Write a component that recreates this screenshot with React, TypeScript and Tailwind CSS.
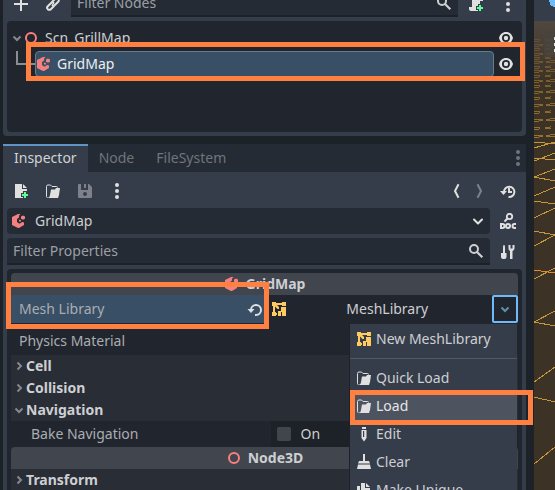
import type { ReactNode } from "react";

type IconProps = { className?: string };

function Svg({ className = "", children }: IconProps & { children: ReactNode }) {
  return (
    <svg viewBox="0 0 16 16" className={`size-4 shrink-0 ${className}`} fill="currentColor" aria-hidden="true">
      {children}
    </svg>
  );
}

const PlusBadge = () => (
  <>
    <path d="M10 8h4v2h2v4h-2v2h-4v-2H8v-4h2z" fill="#363d4a" />
    <path d="M11 9h2v2h2v2h-2v2h-2v-2H9v-2h2z" fill="#5fff97" />
  </>
);

const AddIcon = () => (
  <Svg><path d="M7 1v6H1v2h6v6h2V9h6V7H9V1z" /></Svg>
);
const LinkIcon = () => (
  <Svg>
    <g fill="none" stroke="currentColor" strokeWidth="2" strokeLinecap="round" strokeLinejoin="round">
      <path d="M7.2 5.8l3-3a2.1 2.1 0 0 1 3 3l-3 3a2.1 2.1 0 0 1-2.6.3" />
      <path d="M8.800 10.200l-3 3a2.100 2.100 0 0 1-3-3l3-3a2.100 2.100 0 0 1 2.600-.3" />
    </g>
  </Svg>
);
const SearchIcon = () => (
  <Svg>
    <circle cx="6" cy="6" r="4" fill="none" stroke="currentColor" strokeWidth="2" />
    <path d="M9 9l5.300 5.300" stroke="currentColor" strokeWidth="2.200" />
  </Svg>
);
const ScriptAddIcon = () => (
  <Svg>
    <path d="M6 1a2 2 0 0 0-2 2v8H1v2a2 2 0 0 0 2 2h7a2 2 0 0 0 2-2V5h3V3a2 2 0 0 0-2-2zm6 2h1v1h-1z" />
    <PlusBadge />
  </Svg>
);
const DotsIcon = ({ className }: IconProps) => (
  <Svg className={className}>
    <circle cx="8" cy="2" r="2" /><circle cx="8" cy="8" r="2" /><circle cx="8" cy="14" r="2" />
  </Svg>
);
const EyeIcon = () => (
  <Svg>
    <path fillRule="evenodd" d="M8 2C4.300 2 2 4.500 1 8c1 3.500 3.300 6 7 6s6-2.500 7-6c-1-3.500-3.300-6-7-6zM8 4a4 4 0 1 1 0 8 4 4 0 0 1 0-8z" />
    <circle cx="8" cy="8" r="2.200" />
  </Svg>
);
const NodeRing = () => (
  <Svg className="text-[#fc7f7f]">
    <circle cx="8" cy="8" r="5" fill="none" stroke="currentColor" strokeWidth="2" />
  </Svg>
);
const GridMapIcon = () => (
  <Svg className="text-[#f58080]">
    <path d="M7 1L1 4v8l6 3h1l5-3V9.500l-2-.5-2 1.500H8L6 9V6l2-1.500V2.500L9.500 1.500 8.500 1z" />
    <path d="M10 3.500L12 2.500l2 1v2.300l-2 1-2-1z" />
    <path d="M8 6.500l2 .8v1.200H8z" />
  </Svg>
);
const FileAddIcon = () => (
  <Svg>
    <path d="M2 1v14h12V6H9V1zm8 0v4h4z" />
    <PlusBadge />
  </Svg>
);
const FolderIcon = () => (
  <Svg>
    <path d="M2.500 14.500a1 1 0 0 1-1-1v-10a1.500 1.500 0 0 1 1.500-1.500h2.500L7 3.500h4.500a1 1 0 0 1 1 1" fill="none" stroke="currentColor" />
    <path d="M6 6.500L5 12a3 3 0 0 1-2.500 3H13l1-3 1-7h-4L10 6.500z" />
  </Svg>
);
const SaveIcon = () => (
  <Svg className="text-[#7d818a]">
    <path fillRule="evenodd" d="M2 1a1 1 0 0 0-1 1v12a1 1 0 0 0 1 1h12a1 1 0 0 0 1-1V4l-3-3h-1v6H4V1zm6 8a2 2 0 1 1 0 4 2 2 0 0 1 0-4z" />
    <path d="M7 1h2v4H7z" />
  </Svg>
);
const ChevronLeft = () => (
  <Svg><path d="M10.500 1.200L7 8l3.500 6.800" fill="none" stroke="currentColor" strokeWidth="2" /></Svg>
);
const ChevronRight = () => (
  <Svg className="text-[#7d818a]"><path d="M5.500 1.200L9 8l-3.500 6.800" fill="none" stroke="currentColor" strokeWidth="2" /></Svg>
);
const HistoryIcon = () => (
  <Svg>
    <path d="M4 9a5.200 5.200 0 1 1 4.500 5" fill="none" stroke="currentColor" strokeWidth="2" />
    <path d="M0 8h7l-3.500 4z" />
    <path d="M8 5h2v3h2v2H8z" />
  </Svg>
);
const ArrowDown = ({ className }: IconProps) => (
  <Svg className={className}><path d="M4 6.500l4 4 4-4" fill="none" stroke="currentColor" strokeWidth="2" strokeLinecap="round" strokeLinejoin="round" /></Svg>
);
const DocIcon = () => (
  <Svg>
    <circle cx="9.500" cy="3.500" r="2.700" fill="none" stroke="currentColor" strokeWidth="1.800" />
    <path d="M7.500 5.500L4.500 8.500" stroke="currentColor" strokeWidth="2" />
    <path fillRule="evenodd" d="M0 10h2.500a3 3 0 0 1 0 6H0zm2 2v2h.5a1 1 0 0 0 0-2z" />
    <path fillRule="evenodd" d="M8 10a3 3 0 1 1 0 6 3 3 0 0 1 0-6zm0 2a1 1 0 1 0 0 2 1 1 0 0 0 0-2z" />
    <path d="M16 10h-1.500a3 3 0 0 0 0 6H16v-2h-1.500a1 1 0 0 1 0-2H16z" />
  </Svg>
);
const ToolsIcon = () => (
  <Svg>
    <path d="M3.500 1L3 3v6H1v4a2 2 0 0 0 2 2h1.500a2 2 0 0 0 2-2V9H5V3l-.500-2z" />
    <path d="M8.500 1v3.500A3 3 0 0 0 10 7v8h2.500V7A3 3 0 0 0 14.500 4.500V1h-2v3.500h-2V1z" />
  </Svg>
);
const RevertIcon = () => (
  <Svg>
    <path d="M4 9a5 5 0 1 1 5 5H8" fill="none" stroke="currentColor" strokeWidth="2" />
    <path d="M.5 8h7L4 12z" />
  </Svg>
);
const MeshLibraryIcon = () => (
  <Svg className="text-[#ffca5f]">
    <path d="M1 1h4v1h6V1h4v4h-4V4H6l2 2v2H6.500L4 5.500V11h1v1h1v2H5v1H1v-4h1V5H1z" />
    <path d="M10 6h5v9h-4v-4h-1z" />
    <path d="M7 10h3v5H7z" />
  </Svg>
);
const EditIcon = () => (
  <Svg>
    <path d="M6 1h4v2H6z" /><path fillRule="evenodd" d="M5.500 4h5v8L8 15.500 5.500 12zM7 5v6h1.200V5z" />
  </Svg>
);
const ClearIcon = () => (
  <Svg><path d="M7 0h2v7h4l1 2.500H2L3 7h4zM2 10.500h12L15 15H1z" /></Svg>
);
const DuplicateIcon = () => (
  <Svg><path d="M5 1v9h9V6h-5V1zm5 0v4h4zM1 4v10h9v-3H4V4z" /></Svg>
);

const Fold = ({ open = false, className = "text-[#858890]" }: { open?: boolean; className?: string }) => (
  <svg viewBox="0 0 12 12" className={`size-3 shrink-0 ${className}`} aria-hidden="true">
    <path d={open ? "M2.500 4.500L6 8l3.500-3.500" : "M4.500 2.500L8 6 4.500 9.500"} fill="none" stroke="currentColor" strokeWidth="2" />
  </svg>
);

function Highlight({ className }: { className: string }) {
  return <div className={`pointer-events-none absolute z-20 border-5 border-[#ff8040] ${className}`} />;
}

function IconButton({ label, className = "", children }: { label: string; className?: string; children: ReactNode }) {
  return (
    <button type="button" aria-label={label} className={`flex size-6 shrink-0 items-center justify-center text-[#e0e0e0] ${className}`}>
      {children}
    </button>
  );
}

function FilterField({ label }: { label: string }) {
  return (
    <label className="flex h-[27px] min-w-0 flex-1 items-center rounded-t-sm border-b-2 border-[#1d2229] bg-[#252b34] pr-1.5 pl-1.5">
      <input aria-label={label} placeholder={label} className="min-w-0 flex-1 bg-transparent outline-none placeholder:text-[#9b9fa5]" />
      <SearchIcon />
    </label>
  );
}

function SceneDock() {
  return (
    <section className="h-[136px] overflow-hidden rounded-b-sm bg-[#363d4a] px-1">
      <div className="flex h-[21px] items-end pb-1">
        <div className="flex h-[27px] flex-1 items-center">
          <IconButton label="Add node" className="ml-0.5"><AddIcon /></IconButton>
          <IconButton label="Instantiate scene" className="mr-1.5 ml-2"><LinkIcon /></IconButton>
          <FilterField label="Filter Nodes" />
          <IconButton label="Attach script" className="ml-1.5"><ScriptAddIcon /></IconButton>
          <IconButton label="Scene options" className="mr-0.5 ml-2"><DotsIcon /></IconButton>
        </div>
      </div>
      <div className="h-[111px] rounded-sm bg-[#21262e] py-1" role="tree">
        <div className="flex h-[26px] items-center pr-2 pl-1 text-[#e0e0e0]" role="treeitem">
          <Fold open />
          <span className="flex items-center"><NodeRing /></span>
          <span className="ml-1.5 flex-1 text-[#cdcfd2]">Scn_GrillMap</span>
          <EyeIcon />
        </div>
        <div className="relative flex h-[26px] items-center pr-2 text-[#e0e0e0]" role="treeitem" aria-selected="true">
          <div className="mb-3 ml-[9px] h-[14px] w-[19px] border-b-2 border-l-2 border-[#8a8d93]" />
          <div className="mr-1 flex h-full flex-1 items-center rounded-sm border border-[#697b88] bg-[#394f66] text-[#eceef0]">
            <GridMapIcon />
            <span className="ml-[5px]">GridMap</span>
          </div>
          <EyeIcon />
          <Highlight className="-top-[9px] -right-[3px] -bottom-1 left-[19px]" />
        </div>
      </div>
    </section>
  );
}

function Category({ icon, name }: { icon: ReactNode; name: string }) {
  return (
    <h2 className="flex h-[22px] items-center justify-center gap-1.5 rounded-t-sm bg-[#41454d] font-bold">
      {icon}
      {name}
    </h2>
  );
}

function Section({ name, open }: { name: string; open?: boolean }) {
  return (
    <button type="button" aria-expanded={!!open} className="flex h-[22px] w-full items-center gap-px bg-[#292d36] pl-0.5 font-bold">
      <Fold open={open} />
      {name}
    </button>
  );
}

function MenuItem({ icon, label, active }: { icon: ReactNode; label: string; active?: boolean }) {
  return (
    <button
      type="button"
      role="menuitem"
      className={`relative flex h-7 w-full items-center gap-1 pl-1.5 whitespace-nowrap ${active ? "bg-[#4e545f] text-[#e4e5e7]" : ""}`}
    >
      <span className="text-[#e0e0e0]">{icon}</span>
      {label}
      {active && <Highlight className="-top-0.5 -right-4 -bottom-[5px] left-0" />}
    </button>
  );
}

function ResourceMenu() {
  return (
    <div role="menu" className="absolute top-[29px] right-px z-10 w-[168px] border-l border-[#1d2229] bg-[#363d4a] pt-px">
      <MenuItem icon={<MeshLibraryIcon />} label="New MeshLibrary" />
      <div className="flex h-[11px] items-center"><div className="h-px w-full bg-[#535963]" /></div>
      <MenuItem icon={<FolderIcon />} label="Quick Load" />
      <MenuItem icon={<FolderIcon />} label="Load" active />
      <MenuItem icon={<EditIcon />} label="Edit" />
      <MenuItem icon={<ClearIcon />} label="Clear" />
      <MenuItem icon={<DuplicateIcon />} label="Make Unique" />
    </div>
  );
}

function InspectorDock() {
  return (
    <section className="flex min-h-0 flex-1 flex-col bg-[#363d4a]">
      <div className="flex h-7 shrink-0 items-stretch bg-[#252b34] text-[#70747b]" role="tablist">
        <button type="button" role="tab" aria-selected="true" className="border-t-2 border-[#5f94c4] bg-[#363d4a] px-[11px] pb-0.5 text-[#d0d2d5]">Inspector</button>
        <button type="button" role="tab" className="border-t-2 border-transparent px-[11px] pb-0.5">Node</button>
        <button type="button" role="tab" className="border-t-2 border-transparent px-[11px] pb-0.5">FileSystem</button>
        <button type="button" aria-label="Dock options" className="ml-auto flex items-center"><DotsIcon /></button>
      </div>
      <div className="flex h-9 shrink-0 items-center px-1.5 pt-0.5">
        <IconButton label="New resource"><FileAddIcon /></IconButton>
        <IconButton label="Load resource" className="ml-2"><FolderIcon /></IconButton>
        <IconButton label="Save resource" className="ml-2"><SaveIcon /></IconButton>
        <IconButton label="Resource options" className="ml-2"><DotsIcon /></IconButton>
        <IconButton label="Previous object" className="ml-auto"><ChevronLeft /></IconButton>
        <IconButton label="Next object"><ChevronRight /></IconButton>
        <IconButton label="History" className="ml-1"><HistoryIcon /></IconButton>
      </div>
      <div className="flex flex-col gap-1 px-1">
        <div className="flex items-center">
          <div className="relative flex h-[26px] flex-1 items-center rounded-sm bg-[#252b34] pl-1">
            <GridMapIcon />
            <select aria-label="Edited object" className="h-full min-w-0 flex-1 appearance-none bg-transparent pl-2 outline-none">
              <option>GridMap</option>
            </select>
            <ArrowDown className="pointer-events-none mr-1 text-[#e0e0e0]" />
          </div>
          <IconButton label="Open documentation" className="mr-0.5 ml-1.5"><DocIcon /></IconButton>
        </div>
        <div className="flex items-center">
          <FilterField label="Filter Properties" />
          <IconButton label="Property tools" className="mr-0.5 ml-1.5"><ToolsIcon /></IconButton>
        </div>
        <div className="rounded-t-sm bg-[#21262e] p-1">
          <Category icon={<GridMapIcon />} name="GridMap" />
          <div className="relative flex h-7">
            <div className="relative flex w-1/2 items-center justify-between bg-[#394f66] pr-0.5 pl-2">
              <span className="text-[#a9adb2]">Mesh Library</span>
              <span className="text-[#e0e0e0]"><RevertIcon /></span>
              <Highlight className="-top-[13px] -right-1 -bottom-1.5 -left-[5px]" />
            </div>
            <div className="flex w-1/2 items-center">
              <button type="button" className="flex h-full flex-1 items-center pr-1 pl-1.5">
                <MeshLibraryIcon />
                <span className="flex-1">MeshLibrary</span>
              </button>
              <button type="button" aria-label="Resource menu" aria-expanded="true" className="flex h-7 w-[26px] items-center justify-center rounded-xs border-2 border-[#70bafa]">
                <Fold open className="text-[#5e8fae]" />
              </button>
            </div>
            <ResourceMenu />
          </div>
          <div className="mt-1 flex h-7 items-center pl-2 text-[#a9adb2]">Physics Material</div>
          <Section name="Cell" />
          <Section name="Collision" />
          <Section name="Navigation" open />
          <div className="flex h-[26px]">
            <label htmlFor="bake" className="flex w-1/2 items-center pl-5 text-[#a9adb2]">Bake Navigation</label>
            <div className="w-1/2 pl-1.5">
              <label className="flex h-full items-center gap-2.5 bg-[#1d2229] pl-1.5">
                <input id="bake" type="checkbox" className="size-3.5 appearance-none rounded-xs bg-[#41454d]" />
                On
              </label>
            </div>
          </div>
          <Category icon={<NodeRing />} name="Node3D" />
          <Section name="Transform" />
        </div>
      </div>
    </section>
  );
}

const gridLines = [
  [148, 142], [142, 144], [158, 160], [161, 153], [177, 169], [177, 181], [196, 187], [201, 204],
  [218, 208], [231, 235], [246, 235], [279, 268], [322, 311], [322, 326], [382, 367], [397, 402], [464, 447],
];
const farLines = [40, 45, 49, 54, 58, 62, 67, 71, 76, 81, 86, 92, 98, 105, 112, 120, 128, 136];

function Viewport() {
  return (
    <aside className="relative w-[21px] shrink-0 overflow-hidden bg-[#3d3226]">
      <svg viewBox="0 0 21 490" className="h-[490px] w-full" preserveAspectRatio="none" shapeRendering="crispEdges" aria-label="3D viewport">
        <defs>
          <linearGradient id="haze" x1="0" y1="0" x2="0" y2="1">
            <stop offset="0" stopColor="#504740" />
            <stop offset="1" stopColor="#3d3226" />
          </linearGradient>
        </defs>
        <rect width="21" height="21" fill="#363d4a" />
        <rect y="21" width="21" height="60" fill="url(#haze)" />
        <path d="M15 0h6v6l-1 2-2-3-1 1z" fill="#70bafa" />
        <g stroke="#a77f30" fill="none">
          {farLines.map((y, i) => (
            <path key={y} d={`M0 ${y + 2}L21 ${y - 2}M0 ${y - 1}L21 ${y + 1}`} opacity={0.25 + i * 0.035} strokeDasharray={i % 2 ? "9 3" : "6 5"} />
          ))}
        </g>
        <g stroke="#c6963a" fill="none">
          {gridLines.map(([a, b]) => <path key={`${a}-${b}`} d={`M0 ${a}L21 ${b}`} />)}
          <path d="M0 270L21 273" stroke="#e08a35" />
        </g>
        <path d="M12 31h9v26h-9a2 2 0 0 1-2-2V33a2 2 0 0 1 2-2z" fill="#49443f" opacity=".8" />
        <path d="M20 37h1v3h-1zM20 43h1v3h-1zM20 49h1v3h-1z" fill="#e0e0e0" />
      </svg>
    </aside>
  );
}

export default function App() {
  return (
    <main className="flex h-screen gap-2 overflow-hidden bg-[#1d2229] pl-[3px] font-['Noto_Sans',sans-serif] text-[14px] leading-5 text-[#cdcfd2]">
      <div className="flex min-w-0 flex-1 flex-col gap-2">
        <SceneDock />
        <InspectorDock />
      </div>
      <Viewport />
    </main>
  );
}
